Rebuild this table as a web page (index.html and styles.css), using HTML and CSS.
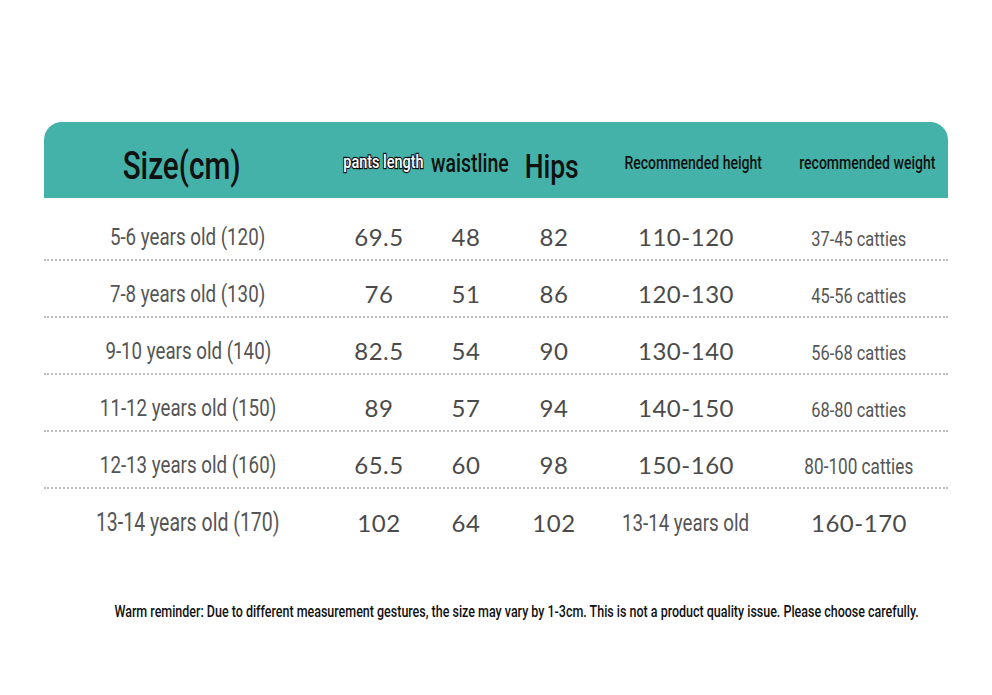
FILE: index.html
```html
<!DOCTYPE html>
<html>
<head>
<meta charset="utf-8">
<link rel="stylesheet" href="styles.css">
</head>
<body>
<div class="page">
  <div class="table">
    <div class="head">
      <div class="h h-size"><span class="cn">Size(cm)</span></div>
      <div class="h h-pants"><span class="cn">pants length</span></div>
      <div class="h h-waist"><span class="cn">waistline</span></div>
      <div class="h h-hips"><span class="cn">Hips</span></div>
      <div class="h h-rec"><span class="cn">Recommended height</span></div>
      <div class="h h-rec2"><span class="cn">recommended weight</span></div>
    </div>
    <div class="row">
      <div class="c label"><span class="cn">5-6 years old (120)</span></div>
      <div class="c num">69.5</div>
      <div class="c num">48</div>
      <div class="c num">82</div>
      <div class="c num">110-120</div>
      <div class="c small"><span class="cn">37-45 catties</span></div>
    </div>
    <div class="row">
      <div class="c label"><span class="cn">7-8 years old (130)</span></div>
      <div class="c num">76</div>
      <div class="c num">51</div>
      <div class="c num">86</div>
      <div class="c num">120-130</div>
      <div class="c small"><span class="cn">45-56 catties</span></div>
    </div>
    <div class="row">
      <div class="c label"><span class="cn">9-10 years old (140)</span></div>
      <div class="c num">82.5</div>
      <div class="c num">54</div>
      <div class="c num">90</div>
      <div class="c num">130-140</div>
      <div class="c small"><span class="cn">56-68 catties</span></div>
    </div>
    <div class="row">
      <div class="c label"><span class="cn">11-12 years old (150)</span></div>
      <div class="c num">89</div>
      <div class="c num">57</div>
      <div class="c num">94</div>
      <div class="c num">140-150</div>
      <div class="c small"><span class="cn">68-80 catties</span></div>
    </div>
    <div class="row">
      <div class="c label"><span class="cn">12-13 years old (160)</span></div>
      <div class="c num">65.5</div>
      <div class="c num">60</div>
      <div class="c num">98</div>
      <div class="c num">150-160</div>
      <div class="c small big"><span class="cn">80-100 catties</span></div>
    </div>
    <div class="row last">
      <div class="c label lg"><span class="cn">13-14 years old (170)</span></div>
      <div class="c num">102</div>
      <div class="c num">64</div>
      <div class="c num">102</div>
      <div class="c label"><span class="cn">13-14 years old</span></div>
      <div class="c num">160-170</div>
    </div>
  </div>
  <div class="note"><span class="cn">Warm reminder: Due to different measurement gestures, the size may vary by 1-3cm. This is not a product quality issue. Please choose carefully.</span></div>
</div>
</body>
</html>
```
FILE: styles.css
```css
html, body {
  margin: 0;
  padding: 0;
  background: #ffffff;
}
.page {
  width: 992px;
  height: 695px;
  padding-top: 122px;
  box-sizing: border-box;
  font-family: Roboto, "Liberation Sans", sans-serif;
}
.cn {
  display: inline-block;
  transform: scaleX(0.78);
  transform-origin: center;
  white-space: nowrap;
}
.table {
  margin-left: 44px;
  width: 904px;
}
.head, .row {
  display: grid;
  grid-template-columns: 288px 94px 80px 96px 168px 178px;
  align-items: center;
}
.head {
  height: 76px;
  background: #44b2a9;
  border-radius: 18px 18px 0 0;
  color: #111;
}
.h, .c {
  display: flex;
  justify-content: center;
  white-space: nowrap;
}
.h { padding-top: 12px; }
.h-size { font-size: 38px; font-weight: 500; margin-right: 12px; }
.h-pants {
  font-size: 18.5px;
  font-weight: 500;
  color: #fff;
  -webkit-text-stroke: 2.4px #111;
  paint-order: stroke fill;
  margin-left: 8px;
  padding-top: 4px;
}
.h-waist { font-size: 25px; font-weight: 500; margin-left: 8px; padding-top: 6px; }
.h-hips { font-size: 34px; font-weight: 500; margin-right: 4px; }
.h-rec, .h-rec2 { font-size: 18px; font-weight: 500; padding-top: 4px; }
.h-rec { margin-left: 14px; }
.h-rec2 { margin-left: 16px; }
.row {
  height: 57px;
  border-bottom: 2px dotted #bdbdbd;
  box-sizing: border-box;
}
.head + .row { margin-top: 6px; }
.row.last { border-bottom: none; }
.c {
  color: #555;
  padding-top: 10px;
}
.label { font-size: 24px; }
.label.lg { font-size: 25px; }
.num {
  font-family: "Lato", "Open Sans", sans-serif;
  font-size: 24px;
  letter-spacing: 0.5px;
  color: #4a4a4a;
}
.small { font-size: 21px; padding-top: 14px; }
.small.big { font-size: 22px; }
.note {
  margin-top: 56px;
  display: flex;
  justify-content: center;
  font-size: 16px;
  font-weight: 500;
  color: #111;
  padding-left: 42px;
}
```
